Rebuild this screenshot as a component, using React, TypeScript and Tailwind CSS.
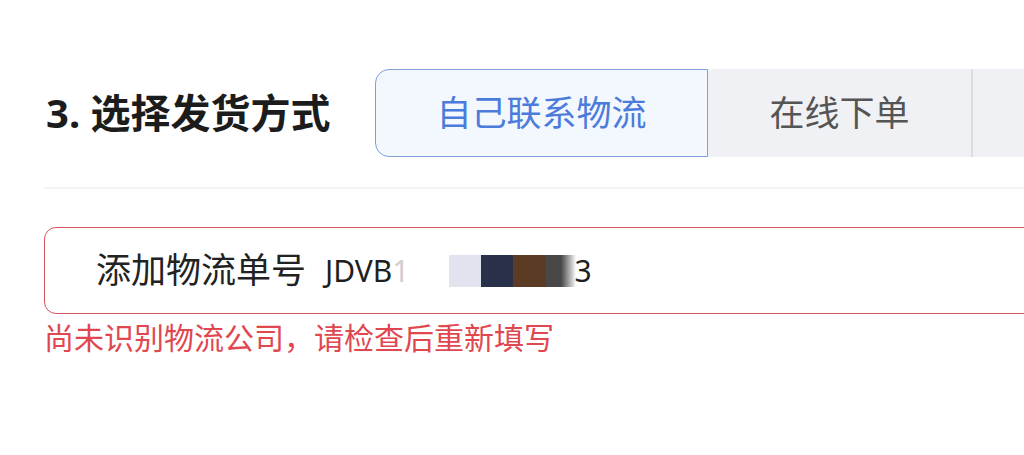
const cjk = '"Noto Sans", "Noto Sans CJK SC", sans-serif'

const tabs = [
  { label: '自己联系物流', active: true, width: 'w-[333px]' },
  { label: '在线下单', active: false, width: 'w-[265px]' },
  { label: '', active: false, width: 'w-[200px]' },
]

export default function App() {
  return (
    <div className="h-[455px] w-[1024px] overflow-hidden bg-white" style={{ fontFamily: cjk }}>
      <div className="w-[1200px] pl-[44px] pt-[69px]">
        {/* Section header with tabs */}
        <div className="flex items-center">
          <h2 className="w-[331px] pl-[2px] text-[40px] font-bold leading-none text-[#1c1c1c]">
            3. 选择发货方式
          </h2>
          <div className="flex h-[88px]">
            {tabs.map((tab, i) => (
              <div
                key={i}
                className={`flex items-center justify-center text-[35px] ${tab.width} ${
                  tab.active
                    ? 'rounded-l-[14px] border border-[#7f9fd6] bg-[#f3f7fe] text-[#4b7bdb]'
                    : 'bg-[#f0f1f4] text-[#555555]'
                } ${i === 1 ? 'border-r-2 border-[#dcdde1]' : ''}`}
              >
                {tab.label}
              </div>
            ))}
          </div>
        </div>

        {/* Divider */}
        <div className="mt-[30px] h-[2px] bg-[#f4f4f4]" />

        {/* Tracking number input */}
        <div className="mt-[38px] flex h-[87px] items-center rounded-[12px] border-[1.5px] border-[#d9535d] pl-[51px]">
          <span className="text-[35px] text-[#222222]">添加物流单号</span>
          <span className="ml-[19px] flex items-center text-[30px] text-[#1f1f1f]">
            JDVB<span className="text-[#cfcfcf]">1</span>
            <span className="ml-[40px] flex h-[32px]">
              <span className="w-[32px] bg-[#e1e4ee]" />
              <span className="w-[32px] bg-[#293049]" />
              <span className="w-[33px] bg-[#5c3b24]" />
              <span className="w-[30px] bg-gradient-to-r from-[#4a4748] via-[#4a4748] to-white" />
            </span>
            <span className="-ml-[2px]">3</span>
          </span>
        </div>

        {/* Error message */}
        <p className="mt-[5px] text-[30px] leading-[38px] text-[#e0474f]">
          尚未识别物流公司，请检查后重新填写
        </p>
      </div>
    </div>
  )
}
